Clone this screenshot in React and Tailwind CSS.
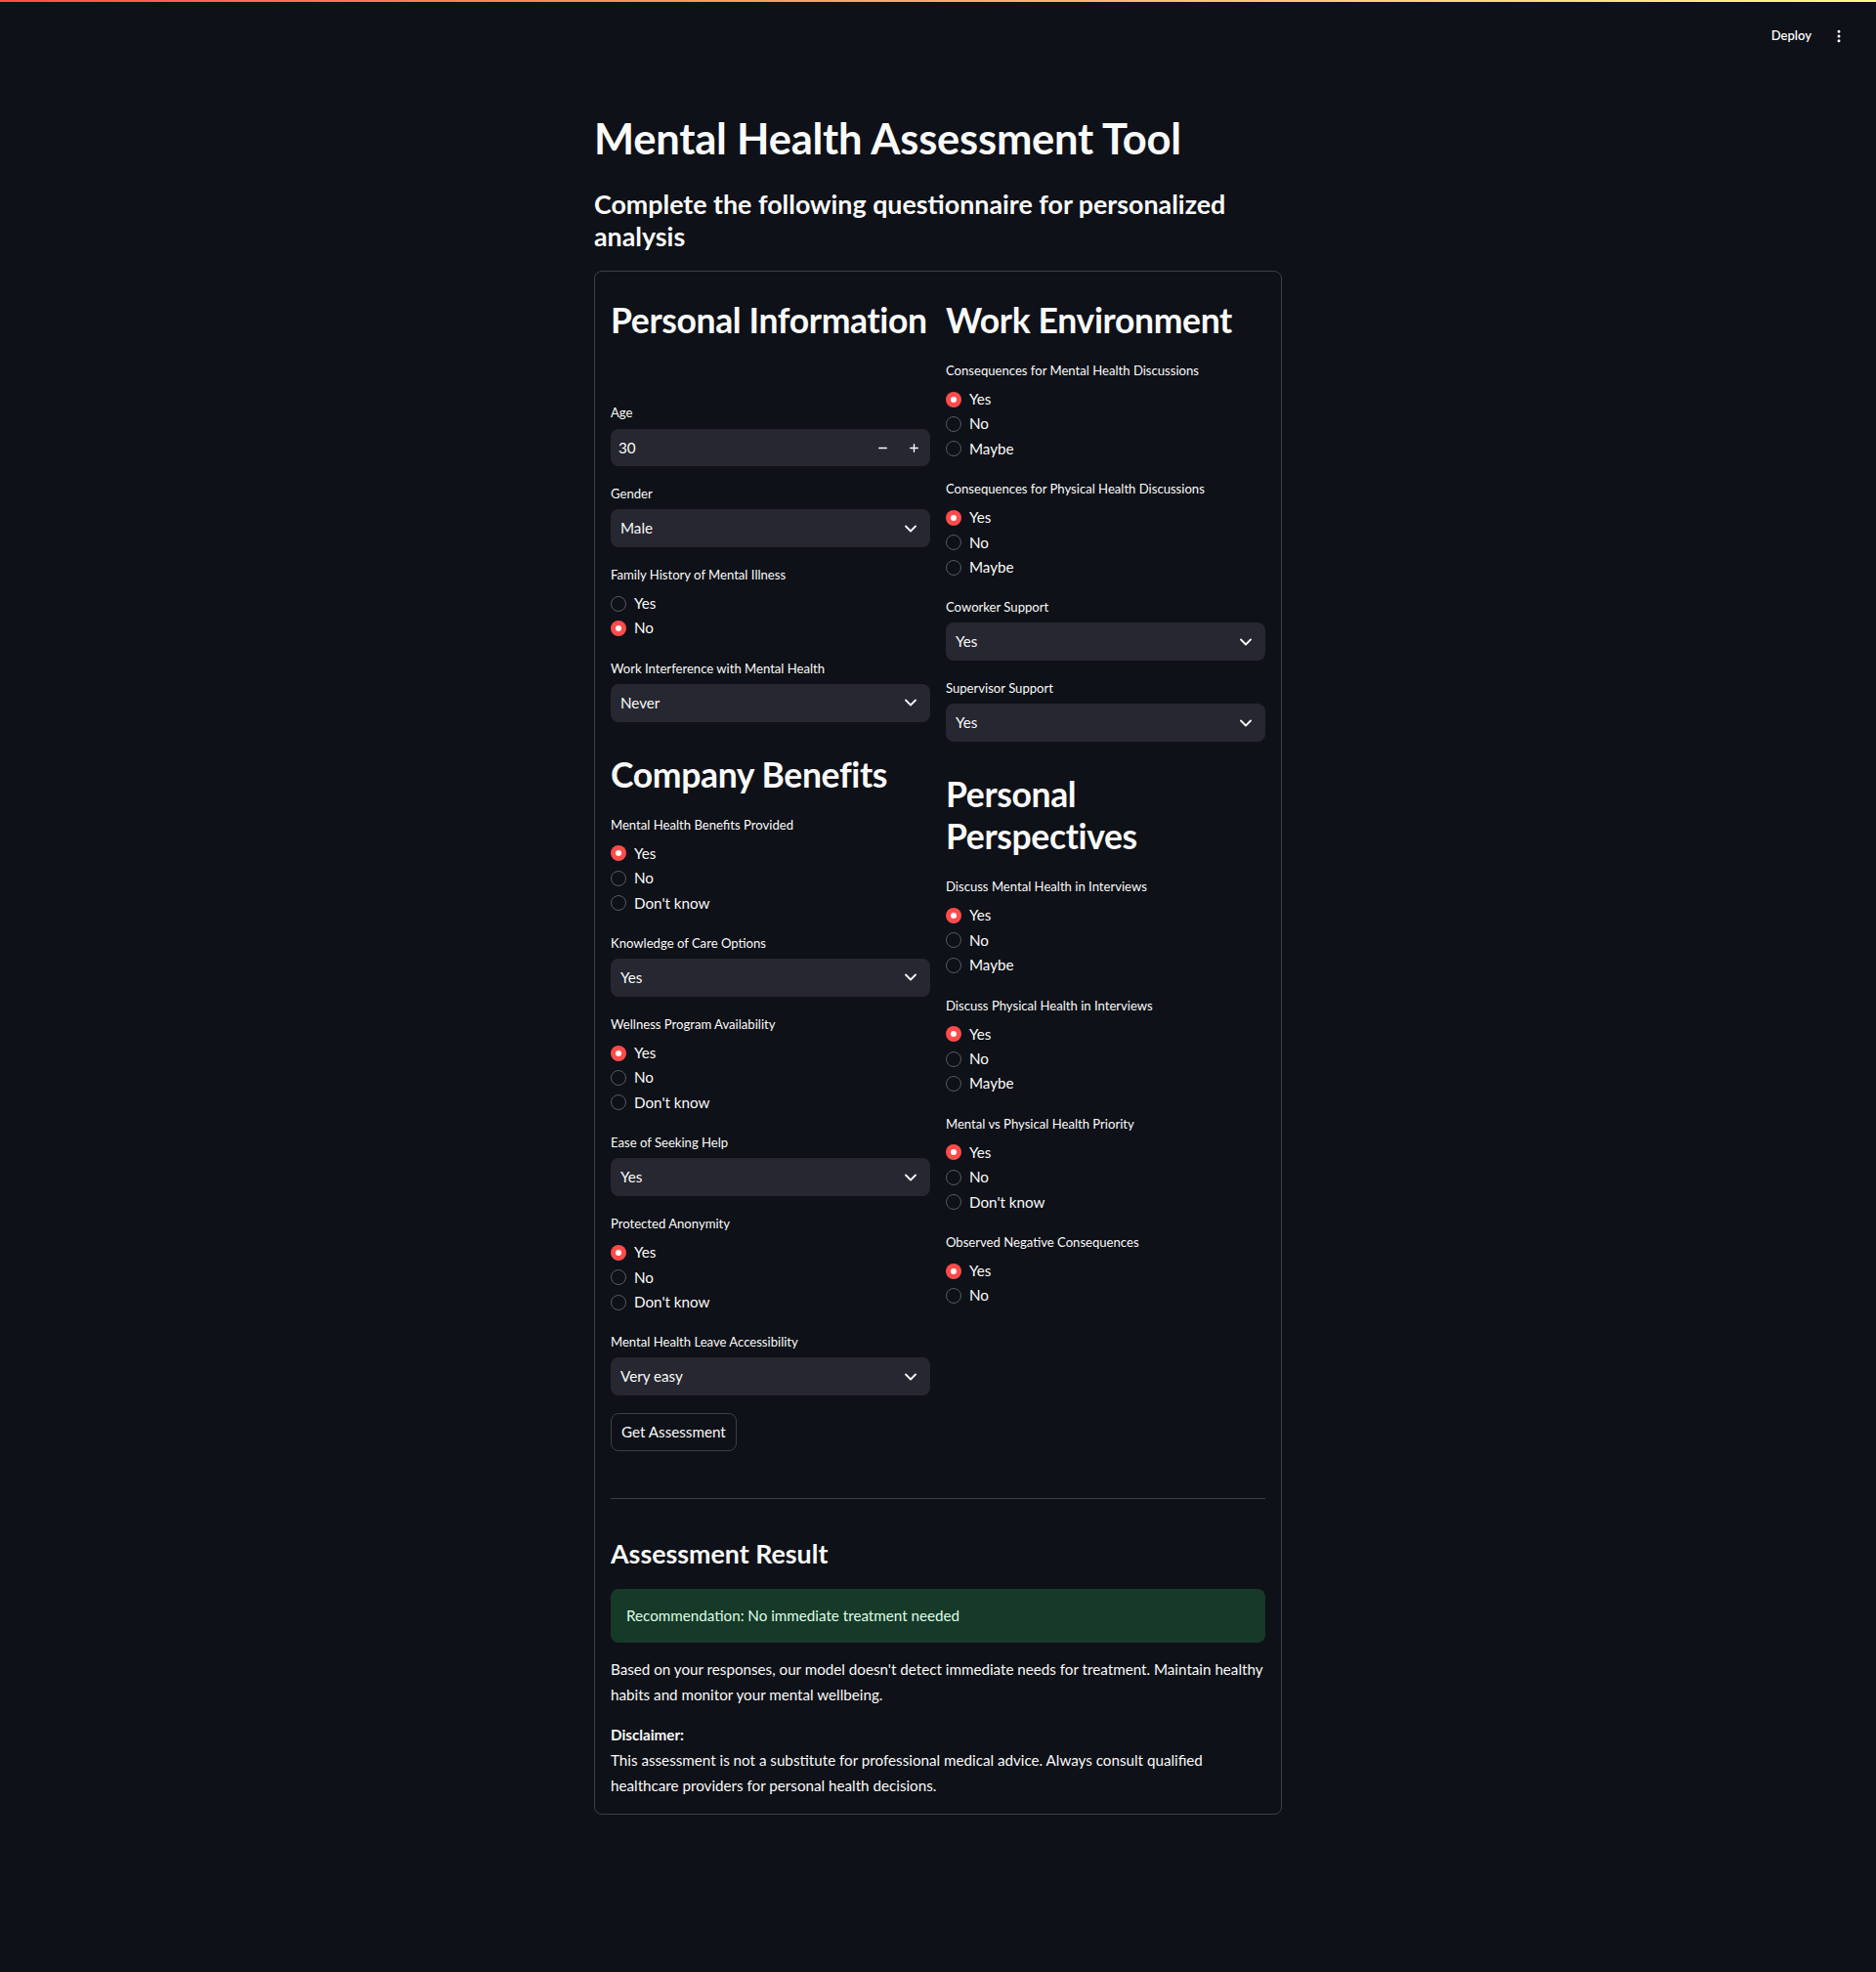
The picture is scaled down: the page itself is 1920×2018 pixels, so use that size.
import React from "react";
import { ChevronDown, Minus, Plus, EllipsisVertical } from "lucide-react";

function Label({ children }) {
  return <div className="h-6 leading-6 text-[13.1px] text-[#fafafa] whitespace-nowrap">{children}</div>;
}

function H2({ children, first }) {
  return (
    <h2
      className={
        (first ? "pt-[12px] " : "pt-[16px] ") +
        "pb-[2px] text-[35.5px] leading-[43px] font-bold tracking-[-0.01em] text-[#fafafa] whitespace-nowrap"
      }
    >
      {children}
    </h2>
  );
}

function Radio({ label, options, selected }) {
  return (
    <div>
      <Label>{label}</Label>
      <div className="mt-[5px]">
        {options.map((o) => (
          <div key={o} className="h-[25.4px] flex items-center gap-2">
            {o === selected ? (
              <span className="w-4 h-4 rounded-full bg-[#ff4b4b] flex items-center justify-center shrink-0">
                <span className="w-[6px] h-[6px] rounded-full bg-white" />
              </span>
            ) : (
              <span className="w-4 h-4 rounded-full border border-[#575961] shrink-0" />
            )}
            <span className="text-[15.2px] leading-none text-[#fafafa]">{o}</span>
          </div>
        ))}
      </div>
    </div>
  );
}

function Select({ label, value }) {
  return (
    <div>
      <Label>{label}</Label>
      <div className="mt-1 h-[39px] rounded-lg bg-[#262730] flex items-center justify-between pl-[10px] pr-[10px]">
        <span className="text-[15.2px] text-[#fafafa]">{value}</span>
        <ChevronDown size={20} strokeWidth={2.2} className="text-[#fafafa]" />
      </div>
    </div>
  );
}

function NumberInput({ label, value }) {
  return (
    <div>
      <Label>{label}</Label>
      <div className="mt-[5px] h-[38px] rounded-lg bg-[#262730] flex items-center">
        <span className="flex-1 pl-2 text-[15.2px] text-[#fafafa]">{value}</span>
        <span className="w-8 h-full flex items-center justify-center">
          <Minus size={13} strokeWidth={2.6} className="text-[#fafafa]" />
        </span>
        <span className="w-8 h-full flex items-center justify-center mr-[1px]">
          <Plus size={13} strokeWidth={2.6} className="text-[#fafafa]" />
        </span>
      </div>
    </div>
  );
}

export default function App() {
  return (
    <div className="min-h-[2018px] bg-[#0e1117] text-[#fafafa] font-['Lato',sans-serif]">
      <div className="h-[2px] bg-gradient-to-r from-[#ff4b4b] to-[#fffd80]" />
      <header className="h-[70px] flex items-center justify-end pr-[30px] gap-[20px]">
        <span className="text-[13px] font-semibold text-[#fafafa]">Deploy</span>
        <EllipsisVertical size={16} strokeWidth={2.5} className="text-[#fafafa]" />
      </header>

      <main className="w-[704px] mx-auto">
        <h1 className="pt-[43px] text-[43.5px] leading-[52px] font-bold tracking-[-0.005em] whitespace-nowrap">
          Mental Health Assessment Tool
        </h1>
        <h3 className="mt-[26px] text-[26.8px] leading-[33px] font-bold whitespace-nowrap">
          Complete the following questionnaire for personalized
          <br />
          analysis
        </h3>

        <div className="mt-[18px] border border-[#3d3f46] rounded-lg p-4">
          <div className="grid grid-cols-2 gap-4">
            {/* Column 1 */}
            <div className="flex flex-col gap-4">
              <H2 first>Personal Information</H2>
              <div className="h-[27px]" />
              <NumberInput label="Age" value="30" />
              <Select label="Gender" value="Male" />
              <Radio label="Family History of Mental Illness" options={["Yes", "No"]} selected="No" />
              <Select label="Work Interference with Mental Health" value="Never" />
              <H2>Company Benefits</H2>
              <Radio
                label="Mental Health Benefits Provided"
                options={["Yes", "No", "Don't know"]}
                selected="Yes"
              />
              <Select label="Knowledge of Care Options" value="Yes" />
              <Radio
                label="Wellness Program Availability"
                options={["Yes", "No", "Don't know"]}
                selected="Yes"
              />
              <Select label="Ease of Seeking Help" value="Yes" />
              <Radio label="Protected Anonymity" options={["Yes", "No", "Don't know"]} selected="Yes" />
              <Select label="Mental Health Leave Accessibility" value="Very easy" />
            </div>

            {/* Column 2 */}
            <div className="flex flex-col gap-4">
              <H2 first>Work Environment</H2>
              <Radio
                label="Consequences for Mental Health Discussions"
                options={["Yes", "No", "Maybe"]}
                selected="Yes"
              />
              <Radio
                label="Consequences for Physical Health Discussions"
                options={["Yes", "No", "Maybe"]}
                selected="Yes"
              />
              <Select label="Coworker Support" value="Yes" />
              <Select label="Supervisor Support" value="Yes" />
              <H2>
                Personal
                <br />
                Perspectives
              </H2>
              <Radio
                label="Discuss Mental Health in Interviews"
                options={["Yes", "No", "Maybe"]}
                selected="Yes"
              />
              <Radio
                label="Discuss Physical Health in Interviews"
                options={["Yes", "No", "Maybe"]}
                selected="Yes"
              />
              <Radio
                label="Mental vs Physical Health Priority"
                options={["Yes", "No", "Don't know"]}
                selected="Yes"
              />
              <Radio label="Observed Negative Consequences" options={["Yes", "No"]} selected="Yes" />
            </div>
          </div>

          <button className="mt-[18px] h-[39px] px-[10px] rounded-lg border border-[#3d3f46] bg-[#0e1117] text-[15.2px] text-[#fafafa]">
            Get Assessment
          </button>

          <hr className="mt-[48px] border-0 border-t border-[#3d3f46]" />

          <h3 className="mt-[40px] text-[26.8px] leading-[33px] font-bold">Assessment Result</h3>

          <div className="mt-[19px] rounded-lg bg-[#163a27] px-4 py-4 text-[15.2px] leading-[23px] text-[#dffde9]">
            Recommendation: No immediate treatment needed
          </div>

          <p className="mt-[15px] text-[15.2px] leading-[25.6px] whitespace-nowrap">
            Based on your responses, our model doesn't detect immediate needs for treatment. Maintain healthy
            <br />
            habits and monitor your mental wellbeing.
          </p>

          <p className="mt-4 text-[15.2px] leading-[25.6px] whitespace-nowrap">
            <span className="font-bold">Disclaimer:</span>
            <br />
            This assessment is not a substitute for professional medical advice. Always consult qualified
            <br />
            healthcare providers for personal health decisions.
          </p>
        </div>
      </main>
    </div>
  );
}
